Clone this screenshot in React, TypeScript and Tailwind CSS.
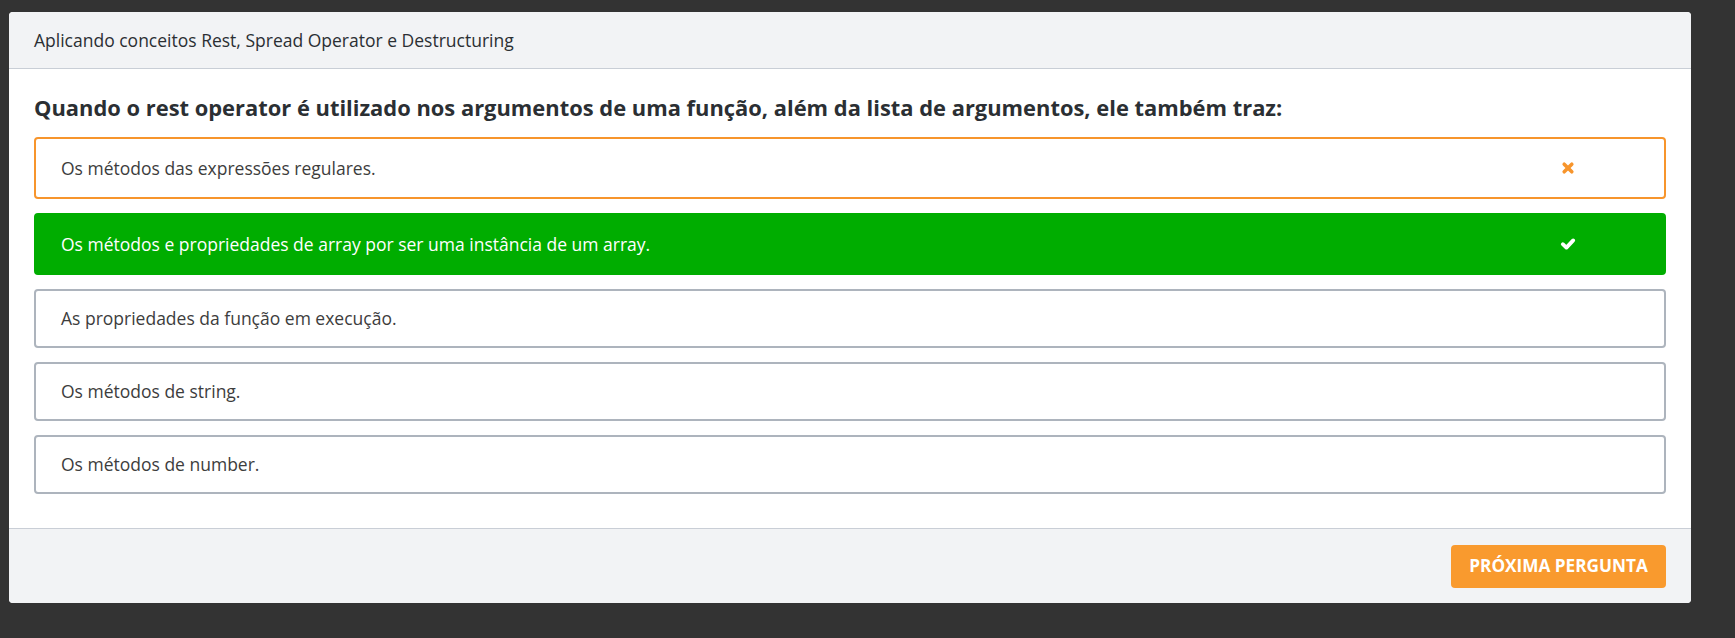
import React from "react"

type Option = { text: string; state?: "wrong" | "right" }

const options: Option[] = [
  { text: "Os métodos das expressões regulares.", state: "wrong" },
  { text: "Os métodos e propriedades de array por ser uma instância de um array.", state: "right" },
  { text: "As propriedades da função em execução." },
  { text: "Os métodos de string." },
  { text: "Os métodos de number." },
]

const TimesIcon = () => (
  <svg viewBox="0 0 16 16" className="w-[16px] h-[16px]">
    <path d="M4.2 4.2 L11.8 11.8 M11.8 4.2 L4.2 11.8" stroke="#f7952c" strokeWidth="3.6" strokeLinecap="round" fill="none" />
  </svg>
)

const CheckIcon = () => (
  <svg viewBox="0 0 16 16" className="w-[16px] h-[16px]">
    <path d="M2.8 8.2 L6.4 11.6 L13.2 4.4" stroke="#ffffff" strokeWidth="3.8" strokeLinecap="round" strokeLinejoin="round" fill="none" />
  </svg>
)

const OptionRow: React.FC<{ option: Option }> = ({ option }) => {
  if (option.state === "wrong") {
    return (
      <div className="h-[62px] flex items-center justify-between rounded-[4px] border-2 border-[#f7952c] bg-white pl-[25px] pr-[88px] text-[17.5px] text-[#3d3d3d]">
        <span>{option.text}</span>
        <TimesIcon />
      </div>
    )
  }
  if (option.state === "right") {
    return (
      <div className="h-[62px] flex items-center justify-between rounded-[4px] border-2 border-[#00ad00] bg-[#00ad00] pl-[25px] pr-[88px] text-[17.5px] text-white font-medium">
        <span>{option.text}</span>
        <CheckIcon />
      </div>
    )
  }
  return (
    <div className="h-[59px] flex items-center rounded-[4px] border-2 border-[#adb4bd] bg-white pl-[25px] text-[17.5px] text-[#3d3d3d]">
      <span>{option.text}</span>
    </div>
  )
}

export default function App() {
  return (
    <div className="min-h-screen bg-[#333333] pt-[12px] pl-[9px]" style={{ fontFamily: "'Open Sans', sans-serif" }}>
      <div className="w-[1682px] rounded-[4px] bg-white overflow-hidden">
        {/* header */}
        <div className="h-[57px] flex items-center bg-[#f2f3f5] border-b border-[#c9ced6] px-[25px] text-[17.5px] text-[#2b2f33]">
          Aplicando conceitos Rest, Spread Operator e Destructuring
        </div>

        {/* body */}
        <div className="px-[25px] pt-[24px] pb-[34px] flex flex-col gap-[14px]">
          <h2 className="text-[21.9px] leading-[30px] font-bold text-[#2b2f33]">
            Quando o rest operator é utilizado nos argumentos de uma função, além da lista de argumentos, ele também traz:
          </h2>
          {options.map((o) => (
            <OptionRow key={o.text} option={o} />
          ))}
        </div>

        {/* footer */}
        <div className="h-[75px] flex items-center justify-end bg-[#f2f3f5] border-t border-[#c9ced6] px-[25px]">
          <button className="w-[215px] h-[43px] rounded-[4px] bg-[#f99a2e] text-white text-[17.2px] font-bold">
            PRÓXIMA PERGUNTA
          </button>
        </div>
      </div>
    </div>
  )
}
